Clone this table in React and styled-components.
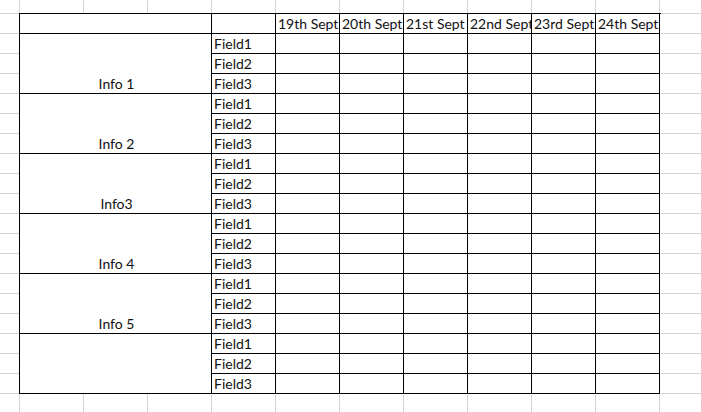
import React from "react";
import styled, { createGlobalStyle } from "styled-components";

const GlobalStyle = createGlobalStyle`
  html, body {
    margin: 0;
    padding: 0;
    background: #ffffff;
  }
`;

const dates = ["19th Sept", "20th Sept", "21st Sept", "22nd Sept", "23rd Sept", "24th Sept"];
const groups = ["Info 1", "Info 2", "Info3", "Info 4", "Info 5", ""];
const fields = ["Field1", "Field2", "Field3"];

const Sheet = styled.div`
  width: 701px;
  height: 412px;
  overflow: hidden;
  box-sizing: border-box;
  padding: 13px 0 0 19px;
  background-color: #ffffff;
  background-image:
    linear-gradient(to right, #d4d4d4 1px, transparent 1px),
    linear-gradient(to bottom, #d4d4d4 1px, transparent 1px);
  background-size: 64px 100%, 100% 20px;
  background-position: 19px 0, 0 13px;
  font-family: "Lato", "Liberation Sans", sans-serif;
  font-size: 14px;
  color: #111;
`;

const Table = styled.div`
  display: grid;
  grid-template-columns: 192px repeat(7, 64px);
  grid-auto-rows: 20px;
  width: 641px;
  border-top: 1px solid #000;
  border-left: 1px solid #000;
  background: #fff;
`;

const Cell = styled.div`
  box-sizing: border-box;
  border-right: 1px solid #000;
  border-bottom: 1px solid #000;
  display: flex;
  align-items: flex-end;
  justify-content: ${(p) => (p.$center ? "center" : "flex-start")};
  padding: 0 0 1px 2px;
  line-height: 16px;
  white-space: nowrap;
  overflow: hidden;
  grid-row: ${(p) => (p.$rows ? `span ${p.$rows}` : "auto")};
`;

export default function App() {
  return (
    <Sheet>
      <GlobalStyle />
      <Table>
        <Cell />
        <Cell />
        {dates.map((d) => (
          <Cell key={d}>{d}</Cell>
        ))}
        {groups.map((g, gi) => (
          <React.Fragment key={gi}>
            <Cell $rows={3} $center>
              {g}
            </Cell>
            {fields.map((f) => (
              <React.Fragment key={f}>
                <Cell>{f}</Cell>
                {dates.map((d) => (
                  <Cell key={d} />
                ))}
              </React.Fragment>
            ))}
          </React.Fragment>
        ))}
      </Table>
    </Sheet>
  );
}
